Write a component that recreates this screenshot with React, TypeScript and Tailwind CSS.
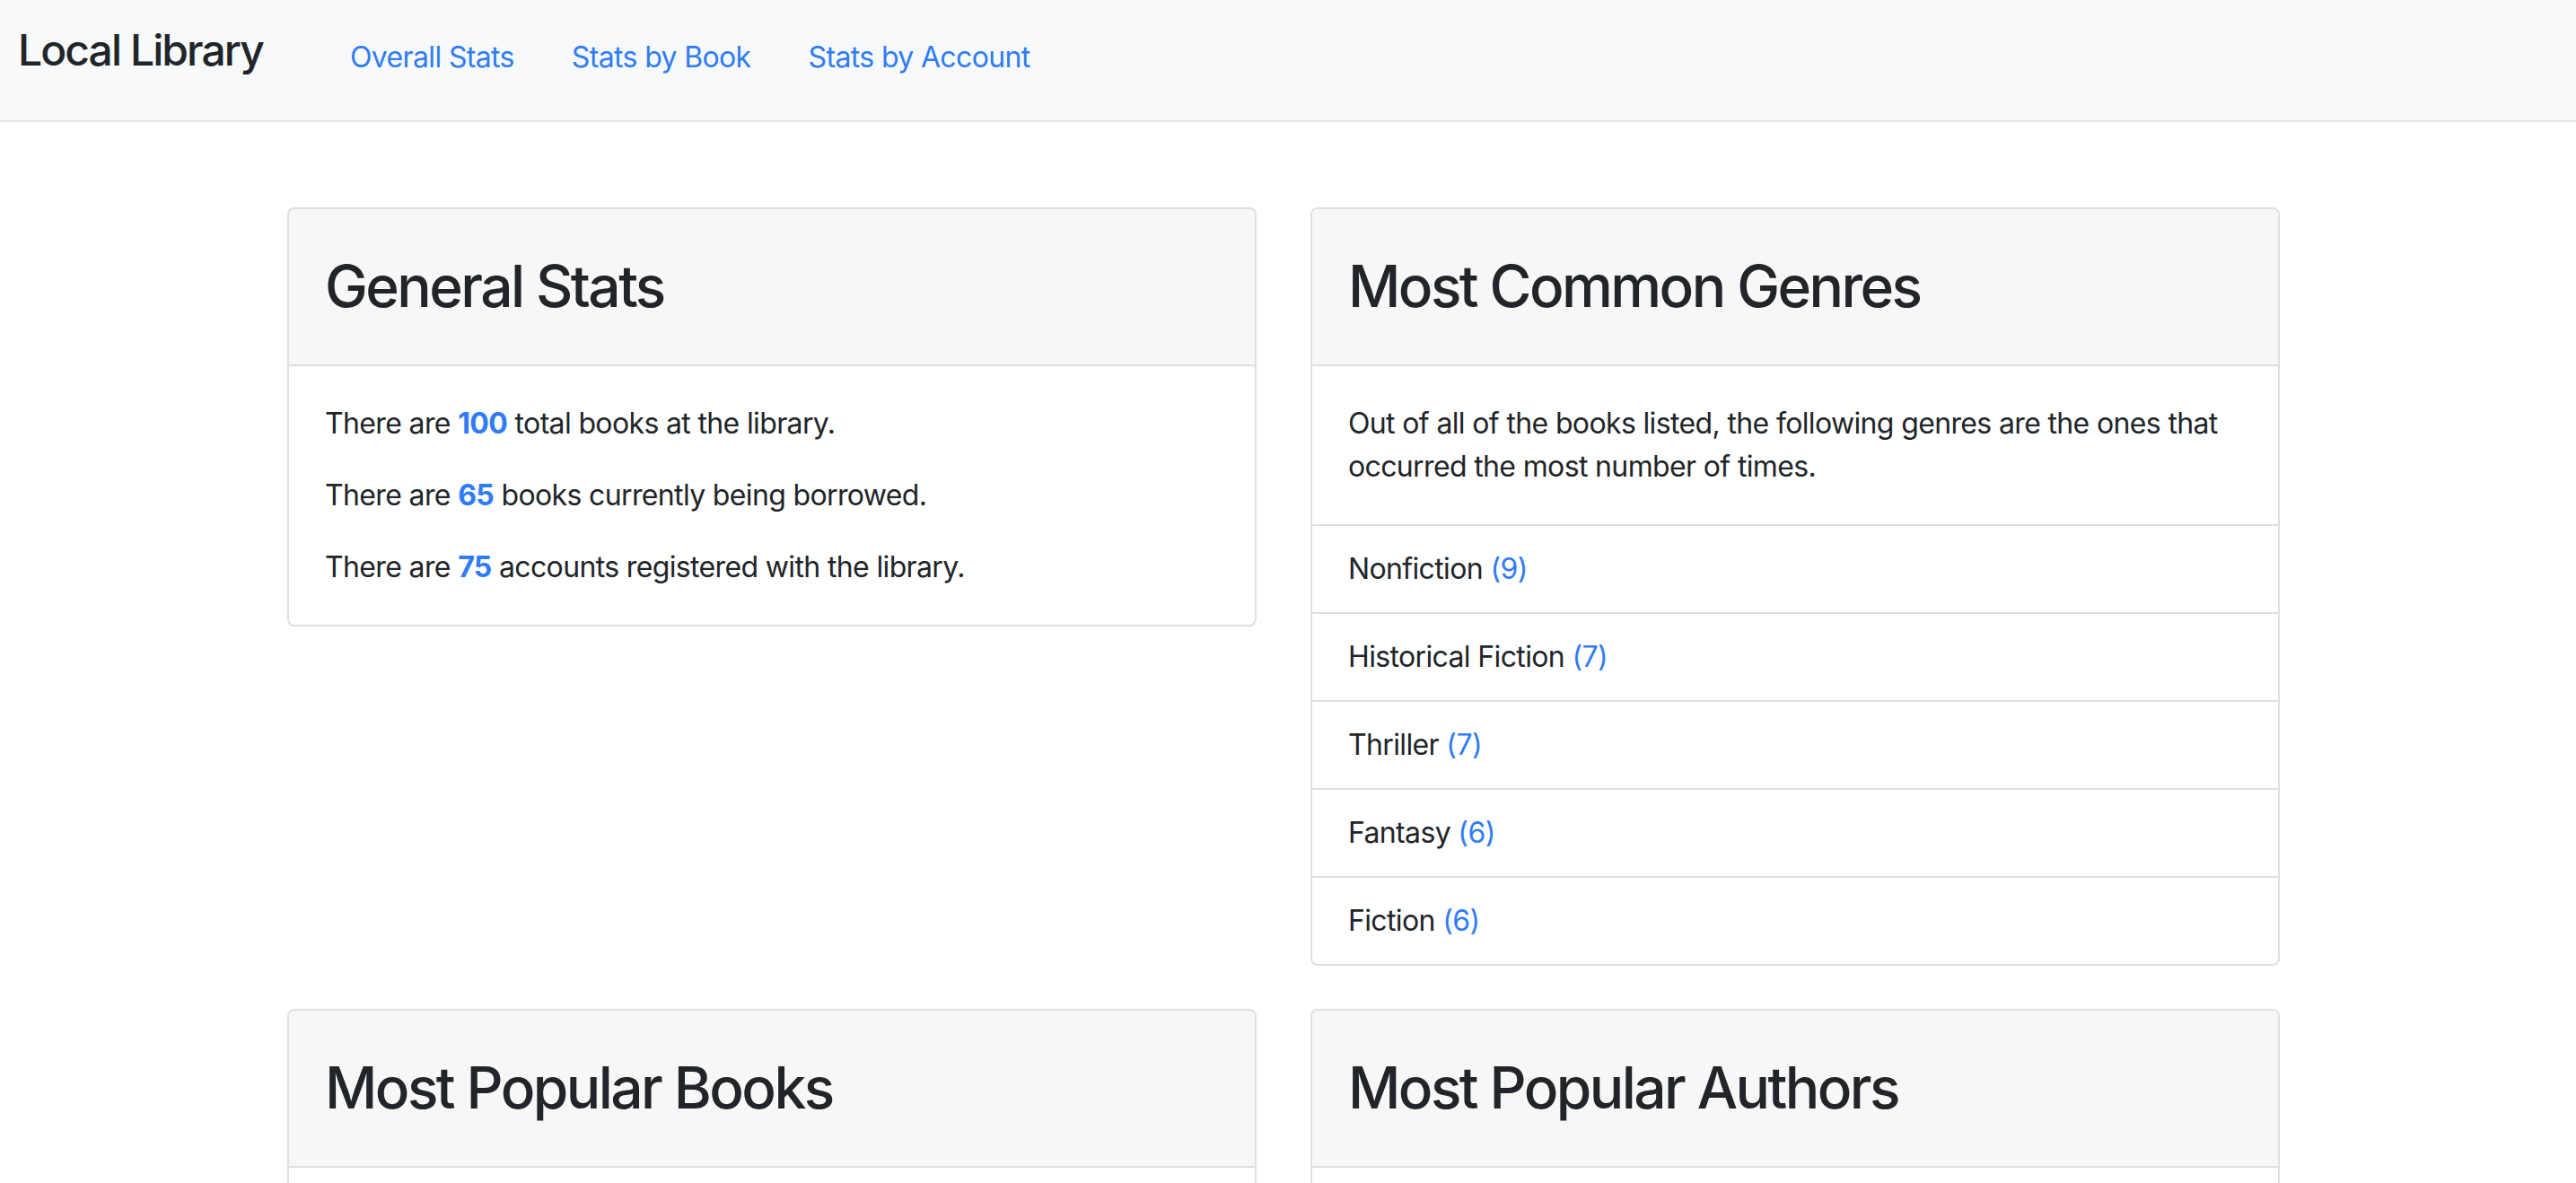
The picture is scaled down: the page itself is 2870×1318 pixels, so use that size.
import type { ReactNode } from 'react';

const genres = [
  { name: 'Nonfiction', count: 9 },
  { name: 'Historical Fiction', count: 7 },
  { name: 'Thriller', count: 7 },
  { name: 'Fantasy', count: 6 },
  { name: 'Fiction', count: 6 },
];

const links = ['Overall Stats', 'Stats by Book', 'Stats by Account'];

const StatCard = ({ title, children }: { title: string; children?: ReactNode }) => (
  <div className="flex flex-col rounded-[8px] border-2 border-[#dfdfdf] bg-white overflow-hidden">
    <div className="bg-[#f7f7f7] border-b-2 border-[#dfdfdf] px-[40px] py-[48px]">
      <h2 className="text-[64px] leading-[1.2] font-medium tracking-[-0.04em] text-[#212529]">{title}</h2>
    </div>
    {children}
  </div>
);

export default function App() {
  return (
    <div className="min-h-screen bg-white text-[#212529] text-[32px] leading-[48px] tracking-[-0.02em] font-['Inter','Noto_Sans',sans-serif]">
      {/* Navbar */}
      <nav className="h-[136px] flex items-start bg-[#f8f9fa] border-b-2 border-[#dee2e6] pl-[20px]">
        <a className="shrink-0 w-[338px] mt-[32px] text-[48px] leading-[48px] font-medium tracking-[-0.04em] text-[#212529]">
          Local Library
        </a>
        <ul className="flex mt-[40px]">
          {links.map((l) => (
            <li key={l}>
              <a className="block px-[32px] text-[#2f7cf6]">{l}</a>
            </li>
          ))}
        </ul>
      </nav>

      <main className="grid grid-cols-2 items-start gap-x-[60px] gap-y-[48px] w-[2220px] ml-[320px] mt-[95px]">
        <StatCard title="General Stats">
          <div className="p-[40px] flex flex-col gap-[32px]">
            <p>
              There are <strong className="font-bold text-[#2f7cf6]">100</strong> total books at the library.
            </p>
            <p>
              There are <strong className="font-bold text-[#2f7cf6]">65</strong> books currently being borrowed.
            </p>
            <p>
              There are <strong className="font-bold text-[#2f7cf6]">75</strong> accounts registered with the library.
            </p>
          </div>
        </StatCard>

        <StatCard title="Most Common Genres">
          <div className="p-[40px]">
            <p>
              Out of all of the books listed, the following genres are the ones that occurred the most number of times.
            </p>
          </div>
          <ul>
            {genres.map((g) => (
              <li key={g.name} className="border-t-2 border-[#dfdfdf] px-[40px] py-[24px]">
                {g.name} <span className="text-[#2f7cf6]">({g.count})</span>
              </li>
            ))}
          </ul>
        </StatCard>

        <StatCard title="Most Popular Books">
          <div className="p-[40px]">
            <p>The books that have been borrowed the most number of times.</p>
          </div>
        </StatCard>

        <StatCard title="Most Popular Authors">
          <div className="p-[40px]">
            <p>The authors whose books have been borrowed the most number of times.</p>
          </div>
        </StatCard>
      </main>
    </div>
  );
}
